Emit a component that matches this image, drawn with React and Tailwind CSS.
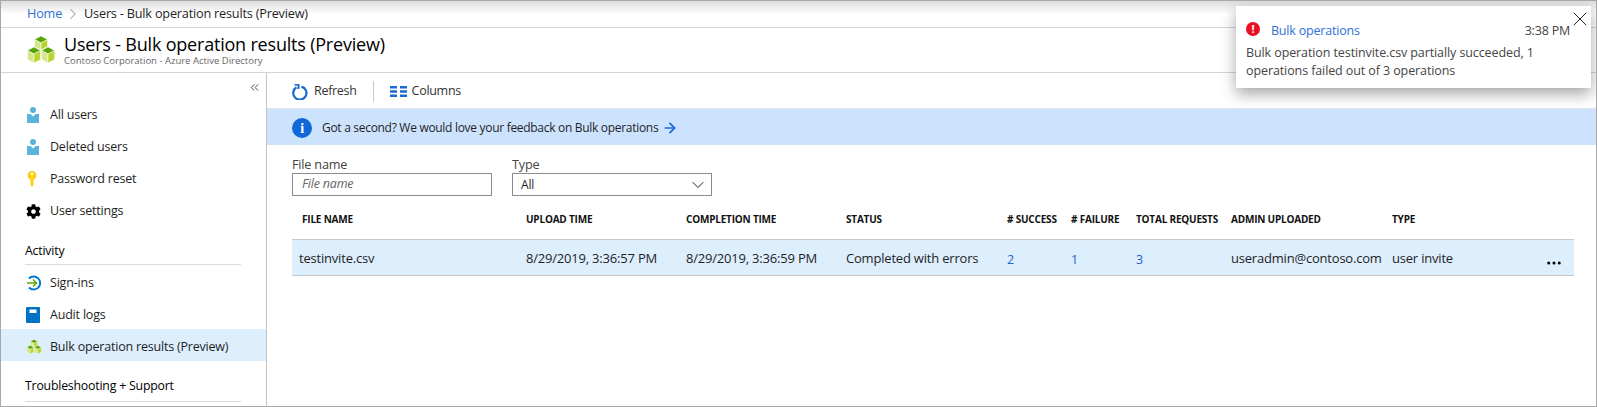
import React from "react";
import { ChevronDown, ChevronRight, ChevronsLeft, X, ArrowRight, MoreHorizontal } from "lucide-react";
import { FaCog } from "react-icons/fa";

const CubesIcon = ({ size = 30 }) => (
	<svg width={size} height={size} viewBox="0 0 30 30" stroke="#ffffff" strokeWidth="0.5">
		<path d="M15 1l6.500 3.500-6.500 3.500-6.500-3.500z" fill="#57a300" />
		<path d="M8.500 4.500l6.500 3.500v7l-6.500-3.500z" fill="#d4e88a" />
		<path d="M21.500 4.500l-6.500 3.500v7l6.500-3.500z" fill="#b8d432" />
		<path d="M8 12l6.500 3.500-6.500 3.500-6.500-3.500z" fill="#57a300" />
		<path d="M1.500 15.500l6.500 3.500v9l-6.500-3.500z" fill="#d4e88a" />
		<path d="M14.500 15.500l-6.500 3.500v9l6.500-3.500z" fill="#b8d432" />
		<path d="M22 12l6.500 3.500-6.500 3.500-6.500-3.500z" fill="#57a300" />
		<path d="M15.500 15.500l6.500 3.500v9l-6.500-3.500z" fill="#d4e88a" />
		<path d="M28.500 15.500l-6.500 3.500v9l6.500-3.500z" fill="#b8d432" />
	</svg>
);

const UserIcon = () => (
	<svg width="14" height="16" viewBox="0 0 14 16">
		<circle cx="7" cy="3" r="3" fill="#59b4d9" />
		<path d="M1 7h3.500l2.500 2.500L9.500 7H13v9H1z" fill="#59b4d9" />
	</svg>
);

const KeyIcon = () => (
	<svg width="12" height="16" viewBox="0 0 12 16">
		<path d="M6 0a4.500 4.500 0 0 1 1.500 8.700V14L6 16l-1.500-2V8.700A4.500 4.500 0 0 1 6 0z" fill="#fcd116" />
		<circle cx="6" cy="3" r="1.200" fill="#ffffff" />
	</svg>
);

const SignInIcon = () => (
	<svg width="16" height="16" viewBox="0 0 16 16" fill="none">
		<path d="M3 3.500A6.500 6.500 0 1 1 3 12.500" stroke="#0078d4" strokeWidth="2" />
		<path d="M1 8h9M7 4.500L10.500 8 7 11.500" stroke="#5ea614" strokeWidth="1.600" />
	</svg>
);

const BookIcon = () => (
	<svg width="14" height="16" viewBox="0 0 14 16">
		<rect width="14" height="16" rx="1" fill="#0072c6" />
		<rect x="3.500" y="2.500" width="7" height="3.500" fill="#ffffff" />
	</svg>
);

const RefreshIcon = () => (
	<svg width="16" height="16" viewBox="0 0 16 16" fill="none" className="mr-[6px]">
		<path d="M4.500 3.300A6.600 6.600 0 1 0 9.500 2.600" stroke="#1a6bd1" strokeWidth="2.200" />
		<path d="M2.500 0.500H6.500V5" stroke="#1a6bd1" strokeWidth="2" />
	</svg>
);

const NavItem = ({ icon, label, active }) => (
	<div className={`flex items-center h-8 pl-[25px] pt-[4px] ${active ? "bg-[#ddeefd]" : ""}`}>
		<span className="w-[24px] flex justify-start">{icon}</span>
		<span className="text-[12.500px] text-[#1f1f1f]">{label}</span>
	</div>
);

const GRID = "grid grid-cols-[234px_160px_160px_161px_64px_65px_95px_161px_1fr] items-center";

const headers = ["FILE NAME", "UPLOAD TIME", "COMPLETION TIME", "STATUS", "# SUCCESS", "# FAILURE", "TOTAL REQUESTS", "ADMIN UPLOADED", "TYPE"];

const App = () => {
	return (
		<div className="relative w-[1597px] h-[407px] overflow-hidden bg-white border border-[#a8a8a8] font-['Open_Sans',sans-serif] tracking-[-0.2px] text-[#1f1f1f]">
			{/* breadcrumb */}
			<div className="h-[27px] flex items-center pl-[26px] gap-[2px] text-[12.700px] border-b border-[#d4d4d4] bg-gradient-to-b from-[#dedede] via-white to-white">
				<span className="text-[#2f6fd6]">Home</span>
				<ChevronRight size={18} strokeWidth={1} className="text-[#666]" />
				<span>Users - Bulk operation results (Preview)</span>
			</div>

			{/* title */}
			<div className="h-[45px] flex items-center pl-[25px] gap-[8px] border-b border-[#d4d4d4]">
				<CubesIcon size={30} />
				<div className="flex flex-col">
					<span className="text-[18px] leading-[22px] font-medium text-black">Users - Bulk operation results (Preview)</span>
					<span className="text-[9.500px] leading-[12px] tracking-normal text-[#666]">Contoso Corporation - Azure Active Directory</span>
				</div>
			</div>

			<div className="flex h-[333px]">
				{/* sidebar */}
				<div className="w-[266px] shrink-0 border-r border-[#c4c4c4] flex flex-col">
					<div className="h-[24px] flex justify-end items-start pt-[8px] pr-[5px]">
						<ChevronsLeft size={13} strokeWidth={1.500} className="text-[#222]" />
					</div>
					<NavItem icon={<UserIcon />} label="All users" />
					<NavItem icon={<UserIcon />} label="Deleted users" />
					<NavItem icon={<KeyIcon />} label="Password reset" />
					<NavItem icon={<FaCog size={15} className="text-black" />} label="User settings" />
					<div className="ml-[24px] mr-[25px] mt-[17px] pb-[4px] text-[12.300px] font-medium text-black border-b border-[#dcdcdc]">Activity</div>
					<NavItem icon={<SignInIcon />} label="Sign-ins" />
					<NavItem icon={<BookIcon />} label="Audit logs" />
					<NavItem icon={<CubesIcon size={16} />} label="Bulk operation results (Preview)" active />
					<div className="ml-[24px] mr-[25px] mt-[16px] pb-[5px] text-[12.300px] font-medium text-black border-b border-[#dcdcdc]">Troubleshooting + Support</div>
				</div>

				{/* main */}
				<div className="flex-1 min-w-0">
					<div className="h-[35px] flex items-center pl-[25px] pt-[2px] text-[12.500px] tracking-[-0.3px] text-[#333]">
						<RefreshIcon />
						<span>Refresh</span>
						<span className="w-px h-[21px] bg-[#c8c8c8] mx-[16px]" />
						<svg width="17" height="11" viewBox="0 0 17 11" className="mr-[5px]">
							<path d="M0 0h7v2.500H0zM10 0h7v2.500h-7zM0 4.200h7v2.500H0zM10 4.200h7v2.500h-7zM0 8.400h7v2.500H0zM10 8.400h7v2.500h-7z" fill="#1a6bd1" />
						</svg>
						<span>Columns</span>
					</div>

					<div className="h-[37px] flex items-center pl-[25px] pt-[2px] bg-[#cde2fd] border-t border-[#dfe6ee] text-[12px] tracking-[-0.3px]">
						<span className="w-5 h-5 rounded-full bg-[#1068d8] text-white flex items-center justify-center text-[14px] font-bold font-['Liberation_Serif',serif] mr-[10px]">i</span>
						<span>Got a second? We would love your feedback on Bulk operations</span>
						<ArrowRight size={16} strokeWidth={2.600} className="text-[#1068d8] ml-[4px]" />
					</div>

					<div className="flex gap-[20px] pl-[25px] pt-[11px]">
						<div className="w-[200px]">
							<div className="text-[12.700px] leading-[17px] text-[#444]">File name</div>
							<div className="h-[23px] border border-[#8c8c8c] flex items-center pl-[9px] text-[12.500px] italic text-[#666]">File name</div>
						</div>
						<div className="w-[200px]">
							<div className="text-[12.700px] leading-[17px] text-[#444]">Type</div>
							<div className="h-[23px] border border-[#8c8c8c] flex items-center justify-between pl-[8px] pr-[3px] text-[12px]">
								<span>All</span>
								<ChevronDown size={20} strokeWidth={1.200} className="text-[#222]" />
							</div>
						</div>
					</div>

					<div className="ml-[25px] mr-[22px] mt-[4px]">
						<div className={`${GRID} h-[39px] text-[10px] font-bold text-[#111]`}>
							{headers.map((h, i) => (
								<span key={h} className={i === 0 ? "pl-[10px]" : ""}>{h}</span>
							))}
						</div>
						<div className={`${GRID} h-[37px] pt-[2px] bg-[#ddeefd] border-y border-[#c8c8c8] text-[13px]`}>
							<span className="pl-[7px]">testinvite.csv</span>
							<span>8/29/2019, 3:36:57 PM</span>
							<span>8/29/2019, 3:36:59 PM</span>
							<span>Completed with errors</span>
							<span className="text-[#2060c8] pt-[3px] text-[12.500px]">2</span>
							<span className="text-[#2060c8] pt-[3px] text-[12.500px]">1</span>
							<span className="text-[#2060c8] pt-[3px] text-[12.500px]">3</span>
							<span>useradmin@contoso.com</span>
							<span className="flex items-center justify-between pr-[11px]">
								user invite
								<MoreHorizontal size={18} strokeWidth={2} className="text-black mt-[8px]" />
							</span>
						</div>
					</div>
				</div>
			</div>

			{/* notification toast */}
			<div className="absolute left-[1235px] top-[5px] w-[355px] h-[82px] bg-white shadow-[0_6px_14px_rgba(0,0,0,0.35)] pl-[10px] pr-[21px] pt-[16px]">
				<X size={24} strokeWidth={1} className="absolute right-[-1px] top-[1px] text-[#222]" />
				<div className="flex items-center text-[12.500px]">
					<span className="w-[14px] h-[14px] -translate-y-[2px] rounded-full bg-[#e81123] text-white flex items-center justify-center text-[11px] font-bold mr-[11px]">!</span>
					<span className="text-[#2f6fd6]">Bulk operations</span>
					<span className="ml-auto text-[#444]">3:38 PM</span>
				</div>
				<div className="mt-[3px] text-[12.500px] leading-[18px] tracking-[-0.1px] text-[#444]">
					Bulk operation testinvite.csv partially succeeded, 1<br />operations failed out of 3 operations
				</div>
			</div>
		</div>
	);
};

export default App;
